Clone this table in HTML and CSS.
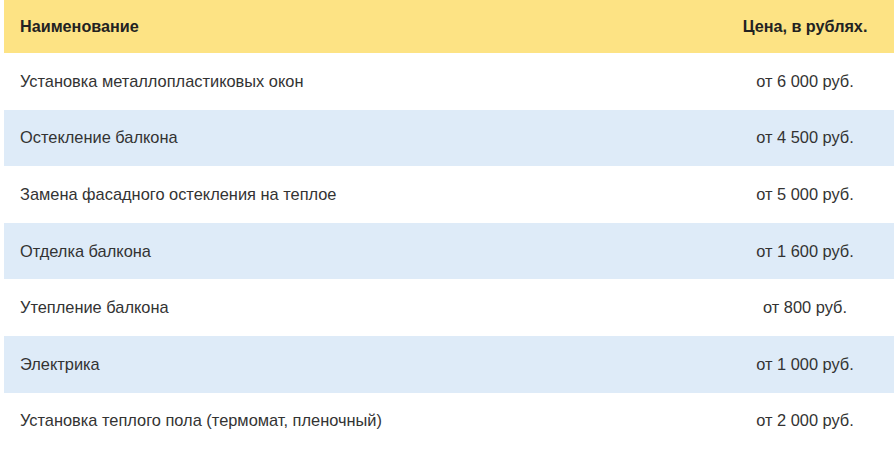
FILE: index.html
```html
<!DOCTYPE html>
<html lang="ru">
<head>
<meta charset="utf-8">
<link rel="stylesheet" href="styles.css">
</head>
<body>
<table class="prices">
  <thead>
    <tr><th class="name">Наименование</th><th class="price">Цена, в рублях.</th></tr>
  </thead>
  <tbody>
    <tr><td class="name">Установка металлопластиковых окон</td><td class="price">от 6 000 руб.</td></tr>
    <tr><td class="name">Остекление балкона</td><td class="price">от 4 500 руб.</td></tr>
    <tr><td class="name">Замена фасадного остекления на теплое</td><td class="price">от 5 000 руб.</td></tr>
    <tr><td class="name">Отделка балкона</td><td class="price">от 1 600 руб.</td></tr>
    <tr><td class="name">Утепление балкона</td><td class="price">от 800 руб.</td></tr>
    <tr><td class="name">Электрика</td><td class="price">от 1 000 руб.</td></tr>
    <tr><td class="name">Установка теплого пола (термомат, пленочный)</td><td class="price">от 2 000 руб.</td></tr>
  </tbody>
</table>
</body>
</html>
```
FILE: styles.css
```css
html, body { margin: 0; padding: 0; background: #fff; }
body { padding-left: 4px; overflow: hidden; }
.prices {
  border-collapse: collapse;
  width: 890px;
  font-family: "Liberation Sans", Arial, sans-serif;
  font-size: 16.4px;
  color: #333;
}
.prices th {
  background: #fde384;
  height: 53px;
  font-weight: bold;
  font-size: 16.2px;
  color: #222;
  padding: 0;
}
.prices td { height: 56.6px; padding: 0; }
.prices tbody tr:nth-child(even) td { background: #deebf8; }
.prices .name { text-align: left; padding-left: 16px; }
.prices .price { text-align: center; width: 178px; }
```
